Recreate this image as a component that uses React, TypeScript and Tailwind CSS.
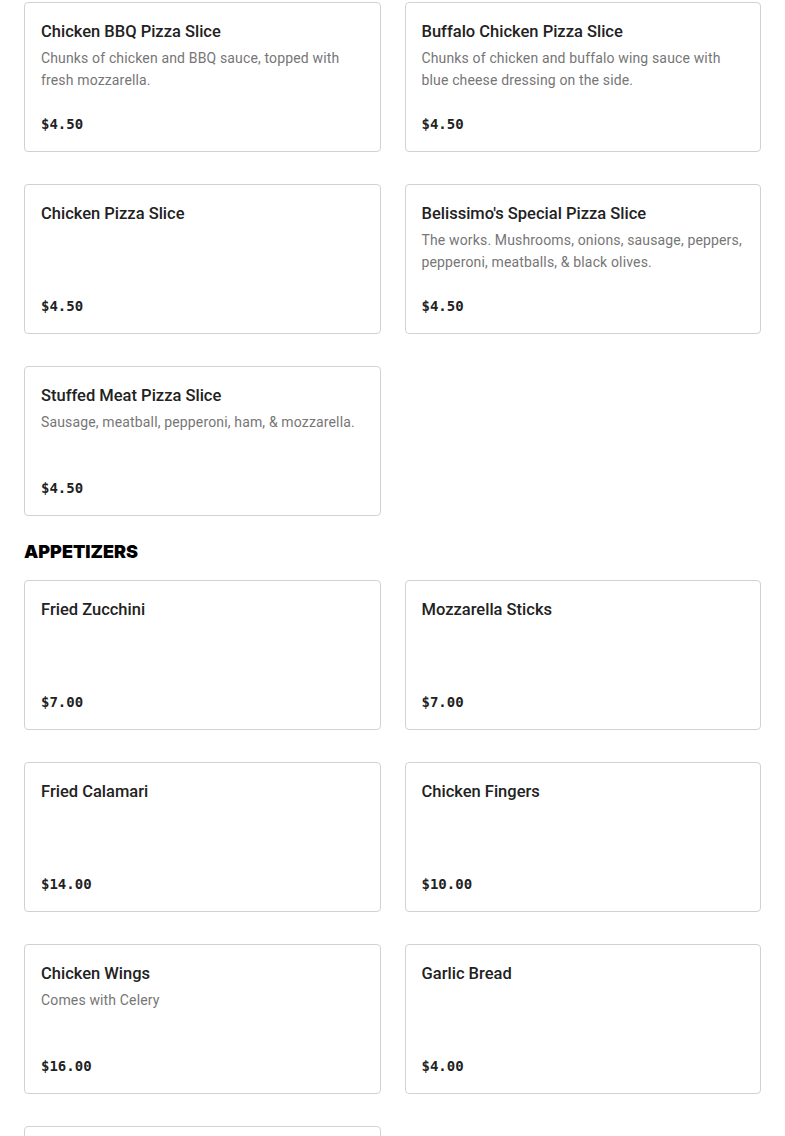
type Item = { name: string; desc?: string; price: string };

const slices: Item[] = [
  { name: "Chicken BBQ Pizza Slice", desc: "Chunks of chicken and BBQ sauce, topped with fresh mozzarella.", price: "$4.50" },
  { name: "Buffalo Chicken Pizza Slice", desc: "Chunks of chicken and buffalo wing sauce with blue cheese dressing on the side.", price: "$4.50" },
  { name: "Chicken Pizza Slice", price: "$4.50" },
  { name: "Belissimo's Special Pizza Slice", desc: "The works. Mushrooms, onions, sausage, peppers, pepperoni, meatballs, & black olives.", price: "$4.50" },
  { name: "Stuffed Meat Pizza Slice", desc: "Sausage, meatball, pepperoni, ham, & mozzarella.", price: "$4.50" },
];

const appetizers: Item[] = [
  { name: "Fried Zucchini", price: "$7.00" },
  { name: "Mozzarella Sticks", price: "$7.00" },
  { name: "Fried Calamari", price: "$14.00" },
  { name: "Chicken Fingers", price: "$10.00" },
  { name: "Chicken Wings", desc: "Comes with Celery", price: "$16.00" },
  { name: "Garlic Bread", price: "$4.00" },
  { name: "French Fries", price: "$5.00" },
];

function MenuCard({ item }: { item: Item }) {
  return (
    <div className="flex h-[150px] flex-col rounded border border-[#d2d2d2] bg-white px-4 pt-[17px] pb-4">
      <h3 className="text-[16.5px] font-medium leading-6 text-[#222]">{item.name}</h3>
      {item.desc && (
        <p className="mt-[3px] text-[14px] leading-[22px] tracking-[0.15px] text-[#767676]">{item.desc}</p>
      )}
      <div className="mt-auto font-['DejaVu_Sans_Mono',monospace] text-[14px] font-bold leading-[22px] text-[#222]">
        {item.price}
      </div>
    </div>
  );
}

export default function App() {
  return (
    <div className="min-h-screen bg-white px-6 pt-[2px] font-['Roboto',sans-serif]">
      <div className="grid grid-cols-2 gap-x-6 gap-y-8">
        {slices.map((it) => (
          <MenuCard key={it.name} item={it} />
        ))}
      </div>

      <h2 className="mt-[22px] mb-[14px] font-['Inter',sans-serif] text-[18px] font-black leading-7 text-black">
        APPETIZERS
      </h2>

      <div className="grid grid-cols-2 gap-x-6 gap-y-8 pb-8">
        {appetizers.map((it) => (
          <MenuCard key={it.name} item={it} />
        ))}
      </div>
    </div>
  );
}
